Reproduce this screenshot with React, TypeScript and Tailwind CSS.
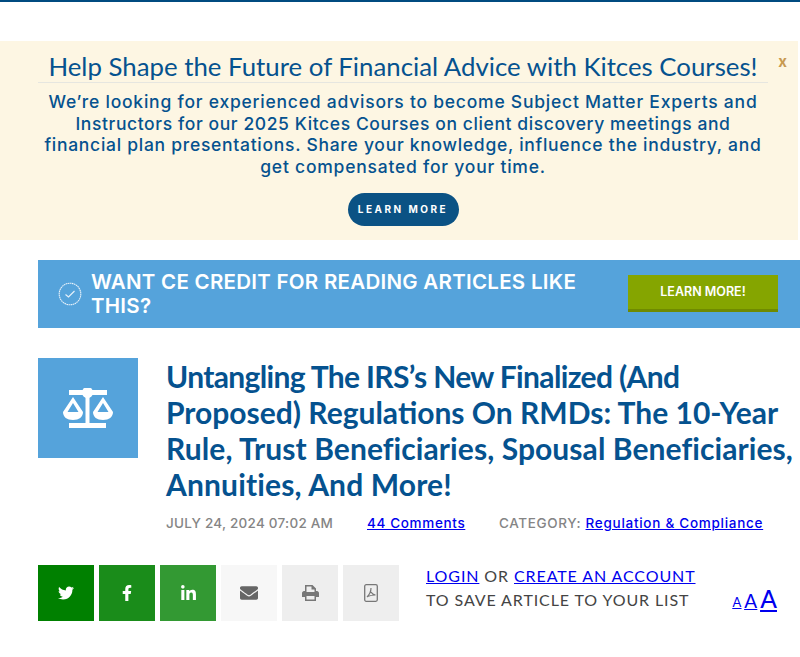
import { FaTwitter, FaFacebookF, FaLinkedinIn, FaEnvelope } from "react-icons/fa";

const body = "font-['Inter','Liberation_Sans',sans-serif]";
const lato = "font-['Lato','Liberation_Sans',sans-serif]";

function ScaleIcon() {
  return (
    <svg width="50" height="40" viewBox="0 0 50 40" fill="white">
      <rect x="6" y="2" width="38" height="5" />
      <circle cx="24.500" cy="4.500" r="5.500" />
      <rect x="22.500" y="4" width="4" height="32" />
      <rect x="6" y="35" width="37" height="5" />
      <path fillRule="evenodd" d="M10 9 L0 24 C0 29 4 32 10 32 C16 32 20 29 20 24 Z M10 15 L15.500 24 H4.500 Z" />
      <path fillRule="evenodd" d="M40 9 L30 24 C30 29 34 32 40 32 C46 32 50 29 50 24 Z M40 15 L45.500 24 H34.500 Z" />
    </svg>
  );
}

function BadgeIcon() {
  return (
    <svg width="24" height="24" viewBox="0 0 24 24" fill="none" stroke="#e8f2fa" strokeWidth="1.100">
      <circle cx="12" cy="12" r="10.800" strokeDasharray="1.600 0.500" />
      <path d="M7.500 12.500 L10.500 15 L16.500 9" />
    </svg>
  );
}

function PrintIcon() {
  return (
    <svg width="17" height="16" viewBox="0 0 17 16" fill="#777777">
      <path fillRule="evenodd" d="M3 0 H10.500 L14 3.500 V6 H15 C16 6 17 7 17 8 V12 H14 V16 H3 V12 H0 V8 C0 7 1 6 2 6 H3 Z M4.500 1.500 V7 H12.500 V4.500 H9.500 V1.500 Z M4.500 11 V14.500 H12.500 V11 Z" />
    </svg>
  );
}

function PdfIcon() {
  return (
    <svg width="14" height="18" viewBox="0 0 14 18" fill="none" stroke="#777777">
      <rect x="0.700" y="0.700" width="12.600" height="16.600" rx="1.500" strokeWidth="1.300" />
      <path d="M7 4 C7 7 6 10 3 13 M7 8 C8 10 9.500 10.800 11.500 11 C9 11 6 11.500 3.500 12.500" strokeWidth="1.200" />
    </svg>
  );
}

function ShareButton({ bg, children }: { bg: string; children: React.ReactNode }) {
  return <div className={`w-14 h-14 flex items-center justify-center ${bg}`}>{children}</div>;
}

export default function App() {
  return (
    <div className="w-[800px] h-[657px] overflow-hidden bg-white border-t-2 border-[#004b80]">
      <div className="h-[39px]" />

      {/* Announcement banner */}
      <div className="relative w-[798px] h-[199px] bg-[#fdf6e3] pl-[38px] pr-[30px] text-center text-[#05528f]">
        <h2 className={`${lato} h-[42px] pt-[6px] text-[25.800px] leading-[38px] border-b border-[#e6e6e0] whitespace-nowrap`}>
          Help Shape the Future of Financial Advice with Kitces Courses!
        </h2>
        <p className={`${body} mt-[8px] -mx-2 text-[17.500px] leading-[21.700px] tracking-[0.770px] font-medium whitespace-nowrap`}>
          We’re looking for experienced advisors to become Subject Matter Experts and<br />
          <span className="tracking-[0.600px]">Instructors for our 2025 Kitces Courses on client discovery meetings and</span><br />
          <span className="tracking-[0.720px]">financial plan presentations. Share your knowledge, influence the industry, and</span><br />
          get compensated for your time.
        </p>
        <div className="mt-[15px] flex justify-center">
          <a className={`${body} w-[111px] h-[33px] rounded-[17px] bg-[#0b5284] text-white text-[10px] font-bold tracking-[2.500px] flex items-center justify-center`}>
            LEARN MORE
          </a>
        </div>
        <span className={`${body} absolute right-[11px] top-[10px] text-[#c89a50] text-[15px] font-bold`}>x</span>
      </div>

      <div className="pl-[38px]">
        {/* CE credit band */}
        <div className="mt-[20px] h-[68px] bg-[#55a3db] flex items-center text-white">
          <div className="w-[53px] flex justify-center pl-[10px] shrink-0"><BadgeIcon /></div>
          <div className={`${body} w-[537px] text-[20.500px] leading-[24px] tracking-[0.270px] font-semibold`}>
            WANT CE CREDIT FOR READING ARTICLES LIKE<br />THIS?
          </div>
          <a className={`${body} self-start mt-[15px] w-[150px] h-[37px] bg-[#85a500] border-b-[3px] border-[#6f8a00] text-[12.500px] font-semibold flex items-center justify-center`}>
            LEARN MORE!
          </a>
        </div>

        {/* Article header */}
        <div className="mt-[30px] flex">
          <div className="w-[100px] h-[100px] bg-[#55a3db] flex items-center justify-center shrink-0">
            <ScaleIcon />
          </div>
          <div className="ml-[28px]">
            <h1 className={`${lato} text-[#05528f] text-[30px] leading-[36px] font-bold whitespace-nowrap`}>
              <span className="tracking-[-0.650px]">Untangling The IRS’s New Finalized (And</span><br />
              Proposed) Regulations On RMDs: The 10-Year<br />
              <span className="tracking-[0.080px]">Rule, Trust Beneficiaries, Spousal Beneficiaries,</span><br />
              <span className="tracking-[0.150px]">Annuities, And More!</span>
            </h1>
            <div className={`${body} mt-[11px] flex text-[13.500px] leading-[20px] text-[#858585] font-medium whitespace-nowrap`}>
              <span className="w-[201px] tracking-[0.250px]">JULY 24, 2024 07:02 AM</span>
              <a className="w-[132px] text-[#0000ee] underline tracking-[0.650px]">44 Comments</a>
              <span className="tracking-[0.650px]">CATEGORY: <a className="text-[#0000ee] underline tracking-[0.720px]">Regulation &amp; Compliance</a></span>
            </div>
          </div>
        </div>

        {/* Share row */}
        <div className="mt-[32px] flex">
          <div className="flex gap-[5px]">
            <ShareButton bg="bg-[#008000]"><FaTwitter className="text-white text-[16px]" /></ShareButton>
            <ShareButton bg="bg-[#1a8c1a]"><FaFacebookF className="text-white text-[16px]" /></ShareButton>
            <ShareButton bg="bg-[#339933]"><FaLinkedinIn className="text-white text-[17px]" /></ShareButton>
            <ShareButton bg="bg-[#f7f7f7]"><FaEnvelope className="text-[#666666] text-[18px]" /></ShareButton>
            <ShareButton bg="bg-[#eeeeee]"><PrintIcon /></ShareButton>
            <ShareButton bg="bg-[#eeeeee]"><PdfIcon /></ShareButton>
          </div>
          <div className={`${lato} ml-[27px] -mt-[1px] text-[16px] leading-[24px] tracking-[0.900px] text-[#444444] whitespace-nowrap`}>
            <div><a className="text-[#0000ee] underline">LOGIN</a> OR <a className="text-[#0000ee] underline">CREATE AN ACCOUNT</a></div>
            <div>TO SAVE ARTICLE TO YOUR LIST</div>
          </div>
          <div className={`${lato} ml-[37px] h-[46px] flex items-end gap-[3px] text-[#0000ee] underline`}>
            <a className="text-[13px] leading-[18px]">A</a>
            <a className="text-[19px] leading-[20px]">A</a>
            <a className="text-[24.500px] leading-[24px] font-medium">A</a>
          </div>
        </div>
      </div>
    </div>
  );
}
